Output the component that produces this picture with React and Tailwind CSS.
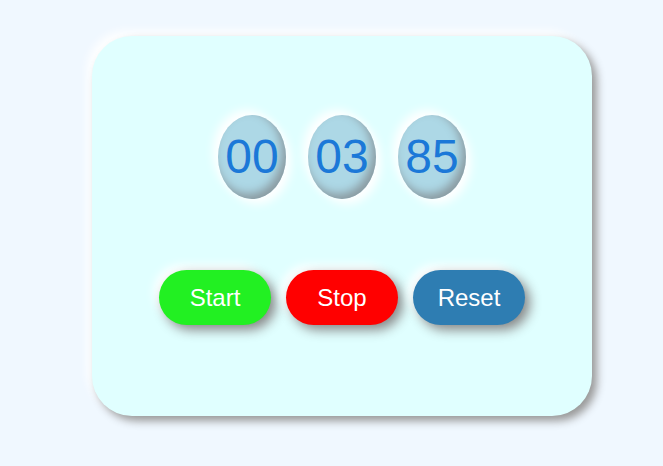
export default function App() {
  const parts = ['00', '03', '85'];
  const buttons = [
    { label: 'Start', cls: 'bg-[#22f022]' },
    { label: 'Stop', cls: 'bg-[#ff0000]' },
    { label: 'Reset', cls: 'bg-[#2e7db2]' },
  ];

  return (
    <div className="min-h-[466px] w-full bg-[#f0f8ff] pt-[36px] pl-[92px] font-['Liberation_Sans',Arial,sans-serif]">
      <div className="w-[500px] h-[380px] rounded-[40px] bg-[#e0ffff] shadow-[5px_5px_8px_#999,-5px_-5px_10px_#ffffff] flex flex-col items-center pt-[79px]">
        <div className="flex gap-[22px]">
          {parts.map((p, i) => (
            <div
              key={i}
              className="w-[68px] h-[84px] rounded-[50%] bg-[#add8e6] flex items-center justify-center text-[48px] leading-none text-[#1b78d8] shadow-[inset_-4px_-5px_10px_#8a9aa0,5px_5px_10px_#ffffff,-5px_-5px_10px_#ffffff]"
            >
              {p}
            </div>
          ))}
        </div>
        <div className="flex gap-[15px] mt-[71px]">
          {buttons.map((b) => (
            <button
              key={b.label}
              className={`w-[112px] h-[55px] rounded-full text-white text-[24px] ${b.cls} shadow-[5px_5px_12px_#888,-5px_-5px_10px_#ffffff]`}
            >
              {b.label}
            </button>
          ))}
        </div>
      </div>
    </div>
  );
}
